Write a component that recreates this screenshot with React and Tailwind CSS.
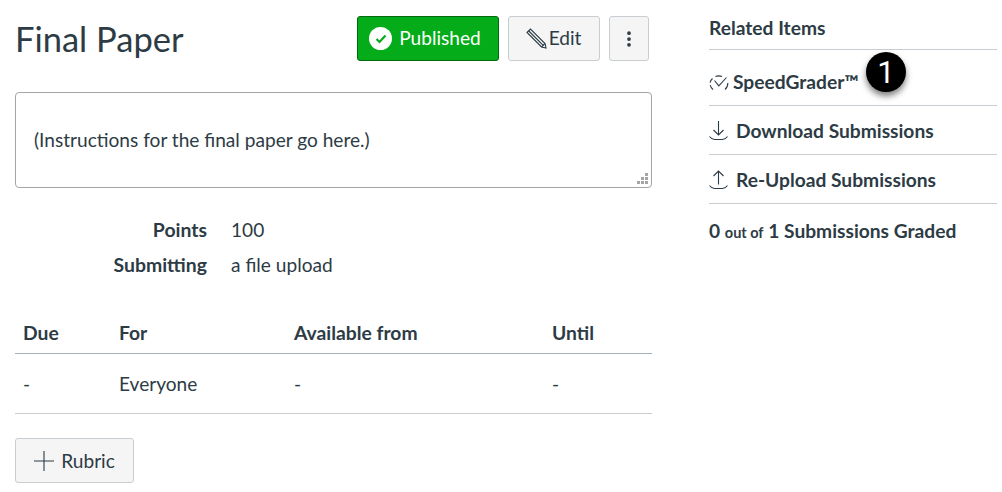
import React from 'react';
import { MoreVertical } from 'lucide-react';

const PencilIcon = () => (
  <svg width="21" height="21" viewBox="0 0 21 21" fill="none" stroke="currentColor" strokeWidth="1.1">
    <path d="M1 4.5 L4.5 1 L19 15.5 L20 20 L15.5 19 Z" />
    <path d="M2.8 3 L17.2 17.4" />
    <path d="M15.5 19 L19 15.5" />
  </svg>
);

const SpeedGraderIcon = () => (
  <svg width="20" height="16" viewBox="0 0 20 16" fill="none" stroke="currentColor" strokeWidth="1.1">
    <path d="M4 14.5 A8 8 0 0 1 1.2 10" />
    <path d="M1 7.5 A8 8 0 0 1 3.5 3.5" />
    <path d="M6.5 1.6 A8 8 0 0 1 13 1.6" />
    <path d="M18.8 8 A8 8 0 0 1 16 14.5" />
    <path d="M5.5 5.5 L9.8 10.8 L17.5 2.5" />
  </svg>
);

const TrayIcon = ({ up }) => (
  <svg width="19" height="20" viewBox="0 0 19 20" fill="none" stroke="currentColor" strokeWidth="1.1">
    {up ? <path d="M9.5 14.5 V1 M4.5 6 L9.5 1 L14.5 6" /> : <path d="M9.5 0 V14 M4.5 9 L9.5 14 L14.5 9" />}
    <path d="M0.5 15.5 C2 17.5 3.5 18.5 5.5 18.5 H13.5 C15.5 18.5 17 17.5 18.5 15.5" />
  </svg>
);

const App = () => {
  return (
    <div className="w-[1002px] h-[492px] bg-white text-[#2d3b45] overflow-hidden flex pl-[15px] pr-[5px] font-['Lato',sans-serif] text-[19.1px]">
      <div className="w-[637px] shrink-0 pt-[16px]">
        <div className="flex items-center h-[45px]">
          <h1 className="text-[34.5px] leading-[47px] font-normal flex-1">Final Paper</h1>
          <button className="w-[142px] h-[45px] pr-[6px] bg-[#03ac18] border border-[#03680f] rounded-[3px] text-white flex items-center justify-center gap-[7px]">
            <span className="w-[23px] h-[23px] rounded-full bg-white flex items-center justify-center">
              <svg width="12" height="10" viewBox="0 0 12 10" fill="none" stroke="#03ac18" strokeWidth="2.2">
                <path d="M1.5 5 L4.5 8 L10.5 1.5" />
              </svg>
            </span>
            Published
          </button>
          <button className="ml-[9px] w-[92px] h-[45px] pr-[1px] bg-[#f5f5f5] border border-[#c7cdd1] rounded-[3px] flex items-center justify-center gap-[2px]">
            <PencilIcon />
            Edit
          </button>
          <button className="ml-[9px] mr-[3px] w-[40px] h-[45px] bg-[#f5f5f5] border border-[#c7cdd1] rounded-[3px] flex items-center justify-center">
            <MoreVertical size={20} strokeWidth={2.5} />
          </button>
        </div>

        <div className="relative mt-[31px] h-[96px] border border-[#a5a5a5] rounded-[4px] pl-[18px] flex items-center">
          <p>(Instructions for the final paper go here.)</p>
          <svg className="absolute right-[2px] bottom-[2px]" width="12" height="12" viewBox="0 0 12 12" fill="#a5a5a5">
            <rect x="8" y="0" width="3" height="3" />
            <rect x="4" y="4" width="3" height="3" />
            <rect x="8" y="4" width="3" height="3" />
            <rect x="0" y="8" width="3" height="3" />
            <rect x="4" y="8" width="3" height="3" />
            <rect x="8" y="8" width="3" height="3" />
          </svg>
        </div>

        <div className="mt-[31px] grid grid-cols-[192px_1fr] gap-x-[24px] gap-y-[13px] leading-[22px]">
          <div className="font-bold text-[19.4px] text-right">Points</div>
          <div>100</div>
          <div className="font-bold text-[19.4px] text-right">Submitting</div>
          <div>a file upload</div>
        </div>

        <div className="mt-[33px] grid grid-cols-[104px_175px_258px_1fr] h-[45px] pt-[4px] items-center font-bold text-[19.3px] border-b border-[#a5afb5]">
          <div className="pl-[8px]">Due</div>
          <div>For</div>
          <div>Available from</div>
          <div>Until</div>
        </div>
        <div className="grid grid-cols-[104px_175px_258px_1fr] h-[60px] pt-[1px] items-center border-b border-[#c7cdd1]">
          <div className="pl-[8px]">-</div>
          <div>Everyone</div>
          <div>-</div>
          <div>-</div>
        </div>

        <button className="mt-[24px] w-[119px] h-[45px] pt-[1px] bg-[#f5f5f5] border border-[#c7cdd1] rounded-[3px] flex items-center justify-center gap-[7px]">
          <svg width="20" height="20" viewBox="0 0 20 20" stroke="currentColor" strokeWidth="1.1">
            <path d="M0 10 H20 M10 0 V20" />
          </svg>
          Rubric
        </button>
      </div>

      <div className="ml-[57px] w-[288px] shrink-0 font-bold text-[19.2px]">
        <div className="h-[50px] pt-[8px] flex items-center border-b border-[#c7cdd1]">Related Items</div>
        <div className="relative h-[56px] pt-[10px] flex items-center gap-[4px] border-b border-[#c7cdd1]">
          <SpeedGraderIcon />
          SpeedGrader™
          <span className="absolute left-[157px] top-[2px] w-[40px] h-[40px] rounded-full bg-black text-white font-normal text-[31px] leading-none flex items-center justify-center [font-family:'Roboto',sans-serif] shadow-[0_4px_6px_rgba(0,0,0,0.5)]">
            1
          </span>
        </div>
        <div className="h-[49px] pt-[2px] flex items-center gap-[8px] border-b border-[#c7cdd1]">
          <TrayIcon />
          <span>Download Submissions</span>
        </div>
        <div className="h-[49px] pt-[2px] flex items-center gap-[8px] border-b border-[#c7cdd1]">
          <TrayIcon up />
          <span>Re-Upload Submissions</span>
        </div>
        <div className="h-[54px] flex items-center">
          <p>
            0 <span className="text-[14.5px]">out of</span> 1 Submissions Graded
          </p>
        </div>
      </div>
    </div>
  );
};

export default App;
